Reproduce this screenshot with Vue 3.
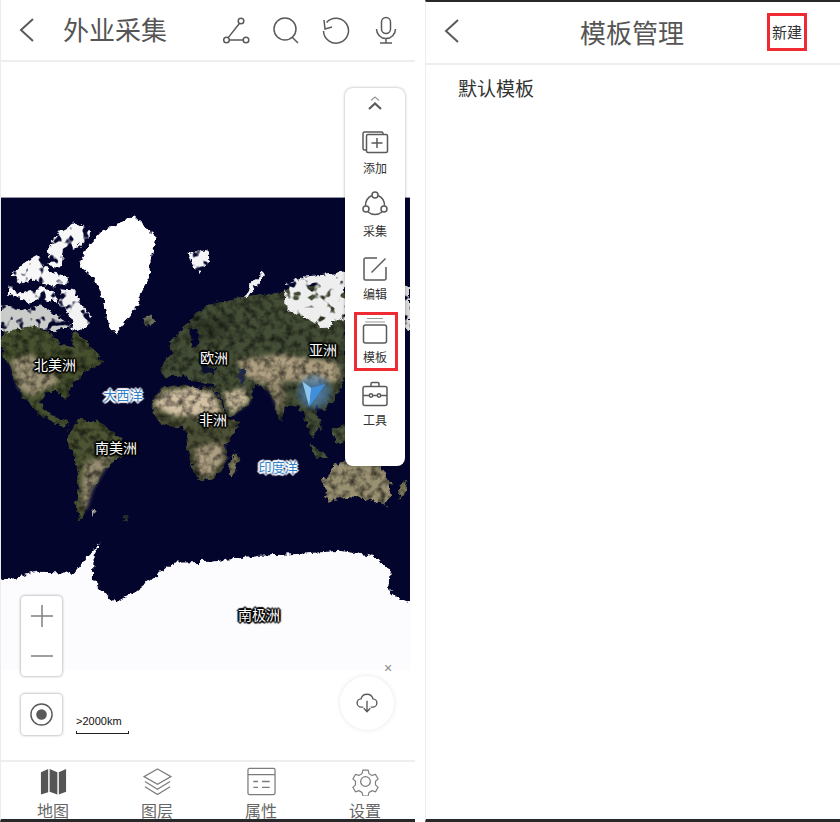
<script setup>
const tools = [
  { key: 'add', label: '添加' },
  { key: 'collect', label: '采集' },
  { key: 'edit', label: '编辑' },
  { key: 'template', label: '模板', active: true },
  { key: 'tool', label: '工具' },
]

const tabs = [
  { key: 'map', label: '地图' },
  { key: 'layer', label: '图层' },
  { key: 'attr', label: '属性' },
  { key: 'set', label: '设置' },
]

// map labels, x / y are relative to the map area
const labels = [
  { text: '北美洲', x: 54, y: 302 },
  { text: '欧洲', x: 213, y: 295 },
  { text: '亚洲', x: 322, y: 287 },
  { text: '大西洋', x: 122, y: 333, sea: true },
  { text: '非洲', x: 212, y: 357 },
  { text: '南美洲', x: 115, y: 385 },
  { text: '印度洋', x: 277, y: 405, sea: true },
  { text: '南极洲', x: 258, y: 552 },
]

const lands = [
  // america
  { c: '#47512f', p: '0,332 30,324 60,338 75,332 90,345 103,362 85,372 70,385 66,402 60,392 45,392 38,402 48,413 68,424 62,427 40,416 25,400 13,378 3,355 0,345' },
  { c: '#4d5433', p: '67,433 80,418 100,423 120,438 120,457 103,470 90,490 83,517 80,522 75,510 78,470 68,447' },
  // eurasia and africa
  { c: '#444e36', p: '165,378 158,368 172,355 168,345 185,325 205,305 240,298 280,292 310,285 345,285 346,375 335,398 325,410 315,405 320,425 313,440 305,420 298,405 285,408 280,422 270,390 255,385 250,403 228,418 218,392 200,385 180,375' },
  { c: '#4d5136', p: '150,408 160,388 195,382 215,392 228,420 240,422 225,445 225,465 210,480 197,480 187,453 185,428 160,425' },
  // islands
  { c: '#9a9172', p: '322,480 335,466 345,460 375,455 392,488 386,506 370,500 345,497 328,502' },
  { c: '#465338', p: '310,445 322,452 328,458 316,458' },
  { c: '#4e583f', p: '332,428 345,424 348,440 335,444' },
  { c: '#7a7658', p: '230,458 236,452 238,462 232,478 227,474' },
  { c: '#7c7a5a', p: '401,484 408,478 405,492 398,500' },
  { c: '#6a7058', p: '142,318 152,316 155,322 146,326' },
  { c: '#b8b8b0', p: '90,510 95,512 93,516' },
  { c: '#4f5a48', p: '122,518 126,516 127,520' },
]

// colour patches inside the land, drawn soft
const patches = [
  { c: '#9c9274', p: '10,360 30,354 48,366 58,382 44,390 30,396 18,388' },
  { c: '#978d72', p: '84,462 102,458 114,450 104,468 92,488 85,510 81,508 82,478' },
  { c: '#d2c1a3', p: '153,405 162,392 195,387 214,395 220,413 198,416 172,416' },
  { c: '#ad9f82', p: '194,448 222,442 222,462 208,477 199,474' },
  { c: '#ad9f80', p: '236,360 280,354 338,362 340,380 318,384 290,380 262,384 246,376' },
  { c: '#cfbf9f', p: '222,393 244,388 249,401 231,414' },
  { c: '#92876a', p: '264,384 280,380 285,396 280,414 272,394' },
  { c: '#343d2a', p: '180,338 200,320 236,312 226,334 200,342' },
]

const seas = [
  { c: '#03052c', p: '50,331 70,330 73,347 58,344' },
  { c: '#03052c', p: '190,330 196,326 199,342 192,348' },
  { c: '#03052c', p: '172,378 200,382 216,386 200,388 180,384' },
  { c: '#20284a', p: '238,368 243,368 245,384 239,382' },
  { c: '#0b1030', p: '200,366 216,368 214,374 202,372' },
]

const arctic = [
  { c: '#f7f7f8', p: '47,250 55,233 73,223 90,227 90,237 77,247 63,250 60,267 50,265' },
  { c: '#f7f7f8', p: '12,273 23,262 37,255 47,270 67,277 67,285 43,285 30,277 23,285 12,277' },
  { c: '#f7f7f8', p: '8,285 20,293 33,290 43,287 53,290 57,303 40,297 30,303 17,298 8,295' },
  { c: '#f2f2f3', p: '60,288 73,290 80,303 90,317 87,327 73,330 68,313 58,303' },
  { c: '#c9ccc8', p: '0,303 20,310 40,305 55,315 70,325 55,331 30,326 0,332' },
  { c: '#f4f4f6', p: '188,254 207,249 208,262 199,273 192,266' },
  { c: '#eeeeee', p: '285,285 305,276 345,272 345,318 325,328 305,318 285,310' },
  { c: '#d9d9d6', p: '402,285 410,284 410,330 402,325' },
]

const snow = [
  { c: '#ffffff', p: '78,265 87,245 100,232 117,223 133,216 143,226 156,236 151,253 148,277 141,290 138,303 128,317 115,334 107,323 103,300 93,277' },
  { c: '#f0f0f0', p: '243,297 250,284 262,272 264,274 254,288 247,298' },
  // antarctica
  { c: '#fcfcfe', p: '0,580 37,572 73,573 90,553 100,542 93,555 92,580 110,600 116,603 133,593 150,580 173,563 210,562 260,556 300,554 340,551 372,556 390,570 388,590 400,600 410,604 420,640 420,690 -10,690 -10,580' },
]
</script>

<template>
  <div class="screens">
    <section class="phone left">
      <header class="bar">
        <svg class="back" viewBox="0 0 20 28"><path d="M16 3 4 14l12 11" /></svg>
        <h1 class="title">外业采集</h1>
        <div class="actions">
          <svg viewBox="0 0 28 28"><circle cx="19" cy="5" r="2.800" /><circle cx="4.500" cy="24" r="2.800" /><circle cx="24" cy="24" r="2.800" /><path d="M17.400 7.500 6.200 21.600M7.300 24h13.900" /></svg>
          <svg viewBox="0 0 28 28"><circle cx="13" cy="13" r="11" /><path d="m20 21 6 6" /></svg>
          <svg viewBox="0 0 28 28"><path d="M2 4 3 13l7-2" /><path d="M4.500 6.500A12.500 12.500 0 1 1 1.500 15" /></svg>
          <svg viewBox="0 0 28 28"><rect x="9.500" y="1.500" width="9" height="16" rx="4.500" /><path d="M4.500 13a9.500 9.500 0 0 0 19 0M14 22.500v4M8 27h12" /></svg>
        </div>
      </header>

      <main class="map-area">
        <svg class="world" viewBox="0 197 410 473">
          <defs>
            <filter id="grain" x="-3%" y="-3%" width="106%" height="106%" color-interpolation-filters="sRGB">
              <feTurbulence type="fractalNoise" baseFrequency="0.14" numOctaves="3" seed="3" result="noise" />
              <feColorMatrix in="noise" type="matrix" values="0 0 0 0 0  0 0 0 0 0  0 0 0 0 0  0 0 0 1.300 -0.500" result="dark" />
              <feComposite in="dark" in2="SourceGraphic" operator="in" result="spots" />
              <feMerge result="all"><feMergeNode in="SourceGraphic" /><feMergeNode in="spots" /></feMerge>
              <feGaussianBlur in="all" stdDeviation="0.400" />
            </filter>
            <filter id="rough" x="-3%" y="-3%" width="106%" height="106%" color-interpolation-filters="sRGB">
              <feTurbulence type="fractalNoise" baseFrequency="0.16" numOctaves="3" seed="11" result="warp" />
              <feDisplacementMap in="SourceGraphic" in2="warp" scale="8" xChannelSelector="R" yChannelSelector="G" />
              <feGaussianBlur stdDeviation="0.400" />
            </filter>
            <filter id="ragged" x="-3%" y="-3%" width="106%" height="106%" color-interpolation-filters="sRGB">
              <feTurbulence type="fractalNoise" baseFrequency="0.16" numOctaves="3" seed="11" result="warp" />
              <feDisplacementMap in="SourceGraphic" in2="warp" scale="8" xChannelSelector="R" yChannelSelector="G" result="shape" />
              <feTurbulence type="fractalNoise" baseFrequency="0.11" numOctaves="2" seed="23" result="noise" />
              <feColorMatrix in="noise" type="matrix" values="0 0 0 0 0  0 0 0 0 0  0 0 0 0 0  0 0 0 8 -4.500" result="holes" />
              <feComposite in="shape" in2="holes" operator="out" />
              <feGaussianBlur stdDeviation="0.400" />
            </filter>
            <filter id="soft" x="-20%" y="-20%" width="140%" height="140%">
              <feGaussianBlur stdDeviation="2" />
            </filter>
            <radialGradient id="glow">
              <stop offset="0" stop-color="#4d7fb0" />
              <stop offset=".65" stop-color="#4d7fb0" stop-opacity=".6" />
              <stop offset="1" stop-color="#4d7fb0" stop-opacity="0" />
            </radialGradient>
          </defs>
          <rect x="0" y="197" width="410" height="420" fill="#03052c" />
          <g filter="url(#grain)">
            <g filter="url(#rough)">
              <polygon v-for="(l, i) in lands" :key="'l' + i" :points="l.p" :fill="l.c" />
            </g>
            <g filter="url(#soft)">
              <polygon v-for="(l, i) in patches" :key="'p' + i" :points="l.p" :fill="l.c" />
            </g>
          </g>
          <g filter="url(#rough)">
            <polygon v-for="(l, i) in seas" :key="'e' + i" :points="l.p" :fill="l.c" />
          </g>
          <g filter="url(#ragged)">
            <polygon v-for="(s, i) in arctic" :key="'a' + i" :points="s.p" :fill="s.c" />
          </g>
          <g filter="url(#rough)">
            <polygon v-for="(s, i) in snow" :key="'s' + i" :points="s.p" :fill="s.c" />
          </g>
          <circle cx="314" cy="392" r="20" fill="url(#glow)" />
          <polygon points="302,381 311,388 309,407" fill="#8ec6f0" />
          <polygon points="311,388 325,384 309,407" fill="#3f8fdc" />
        </svg>

        <span
          v-for="m in labels"
          :key="m.text"
          class="map-label"
          :class="{ sea: m.sea }"
          :style="{ left: m.x + 'px', top: m.y + 'px' }"
        >{{ m.text }}</span>

        <aside class="toolbox">
          <svg class="fold" viewBox="0 0 16 16"><path class="thin" d="m4 4.500 4-3.500 4 3.500" /><path class="bold" d="m2 13 6-5.500 6 5.500" /></svg>
          <div v-for="t in tools" :key="t.key" class="tool" :class="{ active: t.active }">
            <svg viewBox="0 0 28 28">
              <template v-if="t.key === 'add'">
                <path d="M6 22H3.500A1.500 1.500 0 0 1 2 20.500V5.500A1.500 1.500 0 0 1 3.500 4h17A1.500 1.500 0 0 1 22 5.500V6" />
                <rect x="5.500" y="6.500" width="21" height="18" rx="1.500" />
                <path d="M16 10v10M10.500 15h11" />
              </template>
              <template v-else-if="t.key === 'collect'">
                <circle cx="14" cy="4" r="3" /><circle cx="5" cy="18" r="3" /><circle cx="23" cy="18" r="3" />
                <path d="M10.800 4.500A11 11 0 0 0 4.500 14.800M17.200 4.500a11 11 0 0 1 6.300 10.300M7 21a11 11 0 0 0 14 0" />
              </template>
              <template v-else-if="t.key === 'edit'">
                <path d="M16 4H4.500A1.500 1.500 0 0 0 3 5.500v19A1.500 1.500 0 0 0 4.500 26h19a1.500 1.500 0 0 0 1.500-1.500V13" />
                <path d="m10.500 18.500 14-14" />
              </template>
              <template v-else-if="t.key === 'template'">
                <path class="thin" d="M6 1.500h16M4 5h20" />
                <rect x="2.500" y="8" width="23" height="18" rx="2" />
              </template>
              <template v-else>
                <rect x="2" y="6.500" width="24" height="19" rx="2" />
                <path d="M10 6.500V3.500A1 1 0 0 1 11 2.500h6a1 1 0 0 1 1 1v3M2 15.500h6.500M12 15.500h4M19.500 15.500H26" />
                <circle cx="10" cy="15.500" r="1.700" /><circle cx="18" cy="15.500" r="1.700" />
              </template>
            </svg>
            <span>{{ t.label }}</span>
          </div>
        </aside>

        <div class="zoom">
          <button class="zoom-btn"><svg viewBox="0 0 24 24"><path d="M12 1v22M1 12h22" /></svg></button>
          <button class="zoom-btn"><svg viewBox="0 0 24 24"><path d="M1 12h22" /></svg></button>
        </div>
        <button class="locate">
          <svg viewBox="0 0 26 26"><circle cx="13" cy="13" r="11" /><circle class="dot" cx="13" cy="13" r="5.500" /></svg>
        </button>
        <div class="scale"><span>&gt;2000km</span><i></i></div>
        <span class="close">×</span>
        <button class="cloud">
          <svg viewBox="0 0 24 24"><path d="M8 16.500H6A4.500 4.500 0 0 1 5.500 7.500a6.700 6.700 0 0 1 13 0A4.500 4.500 0 0 1 18 16.500h-2M12 9.500V21M8.500 17.800 12 21.500l3.500-3.700" /></svg>
        </button>
      </main>

      <nav class="tabs">
        <div v-for="t in tabs" :key="t.key" class="tab">
          <svg viewBox="0 0 30 30">
            <template v-if="t.key === 'map'">
              <path class="fill" d="M2 5.500 9.500 2v24L2 28.500ZM11 2l8 3.500v23l-8-3ZM20.500 5.500 28 2v23.500l-7.500 3Z" />
            </template>
            <template v-else-if="t.key === 'layer'">
              <path d="M15 2 29 10 15 18 1 10Z" /><path d="m2 15 13 8 13-8M2 20.500l13 8 13-8" />
            </template>
            <template v-else-if="t.key === 'attr'">
              <rect x="1" y="1.500" width="28" height="27" rx="1.500" /><path d="M1 8h28M6.500 15h5M15.500 15h8M6.500 21h5M15.500 21h8" />
            </template>
            <template v-else>
              <path d="m12 2 6 0 1 4 3.500 2 4-1.200 3 5.200-3 2.800v4l3 2.800-3 5.200-4-1.200-3.500 2-1 4h-6l-1-4-3.500-2-4 1.200-3-5.200 3-2.800v-4l-3-2.800 3-5.200 4 1.200 3.500-2Z" transform="translate(1.500 1.500) scale(.9)" />
              <circle cx="15" cy="15" r="5" />
            </template>
          </svg>
          <span>{{ t.label }}</span>
        </div>
      </nav>
    </section>

    <section class="phone right">
      <header class="bar">
        <svg class="back" viewBox="0 0 20 28"><path d="M16 3 4 14l12 11" /></svg>
        <h1 class="title">模板管理</h1>
        <button class="create">新建</button>
      </header>
      <div class="row">默认模板</div>
    </section>
  </div>
</template>

<style>
html, body { background: #fff; }
</style>

<style scoped>
.screens {
  display: flex;
  justify-content: space-between;
  width: 840px;
  height: 822px;
  overflow: hidden;
  background: #fff;
  font-family: "Noto Sans CJK SC", "Noto Sans", sans-serif;
  color: #333;
}
.phone {
  position: relative;
  display: flex;
  flex-direction: column;
  width: 415px;
  height: 822px;
  box-sizing: border-box;
  border-left: 1px solid #ececec;
  border-bottom: 3px solid #26282a;
  overflow: hidden;
}
svg {
  display: block;
  fill: none;
  stroke: #5a5a5a;
  stroke-width: 1.500;
}
button {
  padding: 0;
  border: 0;
  background: #fff;
}

/* top bars */
.bar {
  flex: none;
  display: flex;
  align-items: center;
  box-sizing: border-box;
  height: 62px;
  border-bottom: 2px solid #eeeeee;
}
.left .bar { padding: 0 15px 0 16px; }
.back {
  flex: none;
  width: 20px;
  height: 28px;
  stroke-width: 2;
}
.title {
  margin: -2px 0 0;
  font-size: 26px;
  line-height: 36px;
  font-weight: 400;
  color: #555;
}
.left .title { margin-left: 26px; }
.actions {
  display: flex;
  gap: 22px;
  margin-left: auto;
}
.actions svg {
  width: 28px;
  height: 28px;
}

/* map */
.map-area {
  position: relative;
  flex: 1;
  min-height: 0;
  padding-top: 135px;
}
.world {
  width: 409px;
  height: 473px;
  stroke: none;
}
.map-label {
  position: absolute;
  transform: translate(-50%, -50%);
  font-size: 14px;
  line-height: 18px;
  white-space: nowrap;
  color: #fff;
  text-shadow: 0 0 2px #000, 1px 1px 1px #000, -1px -1px 1px #000, 1px -1px 1px #000, -1px 1px 1px #000, 2px 0 1px #000, -2px 0 1px #000, 0 2px 1px #000, 0 -2px 1px #000;
}
.map-label.sea {
  font-size: 13px;
  color: #2f7fcc;
  text-shadow: 0 0 2px #fff, 1px 1px 1px #fff, -1px -1px 1px #fff, 1px -1px 1px #fff, -1px 1px 1px #fff, 2px 0 1px #fff, -2px 0 1px #fff, 0 2px 1px #fff, 0 -2px 1px #fff;
}

/* tool box */
.toolbox {
  position: absolute;
  left: 344px;
  top: 26px;
  display: flex;
  flex-direction: column;
  align-items: center;
  gap: 16px;
  box-sizing: border-box;
  width: 60px;
  height: 378px;
  padding-top: 8px;
  border-radius: 8px;
  background: #fff;
  box-shadow: 0 0 3px rgba(0, 0, 0, .35);
}
.fold {
  width: 16px;
  height: 16px;
}
.fold .thin { stroke: #999; stroke-width: 1.200; }
.fold .bold { stroke-width: 2.200; }
.tool {
  position: relative;
  display: flex;
  flex-direction: column;
  align-items: center;
  gap: 4px;
  width: 100%;
  font-size: 12px;
  line-height: 15px;
}
.tool svg {
  width: 28px;
  height: 28px;
}
.tool .thin { stroke: #999; stroke-width: 1; }
.tool.active::after {
  content: "";
  position: absolute;
  inset: -5px 7px -7px 9px;
  border: 3px solid #ee2a33;
}

/* map buttons */
.zoom {
  position: absolute;
  left: 20px;
  top: 534px;
  display: flex;
  flex-direction: column;
  width: 41px;
  height: 80px;
  border-radius: 4px;
  background: #fff;
  box-shadow: 0 0 3px rgba(0, 0, 0, .45);
}
.zoom-btn {
  display: flex;
  flex: 1;
  align-items: center;
  justify-content: center;
  background: transparent;
}
.zoom-btn svg {
  width: 24px;
  height: 24px;
  stroke: #808080;
}
.locate {
  position: absolute;
  left: 20px;
  top: 632px;
  display: flex;
  align-items: center;
  justify-content: center;
  width: 41px;
  height: 41px;
  border-radius: 4px;
  box-shadow: 0 0 3px rgba(0, 0, 0, .45);
}
.locate svg {
  width: 25px;
  height: 25px;
}
.locate .dot {
  fill: #5a5a5a;
  stroke: none;
}
.scale {
  position: absolute;
  left: 75px;
  top: 653px;
  width: 53px;
}
.scale span {
  display: block;
  font-family: "Liberation Sans", sans-serif;
  font-size: 11px;
  line-height: 13px;
  color: #111;
}
.scale i {
  display: block;
  height: 2px;
  margin-top: 3px;
  border: 1px solid #222;
  border-top: 0;
}
.close {
  position: absolute;
  left: 383px;
  top: 598px;
  font-family: "Liberation Sans", sans-serif;
  font-size: 14px;
  line-height: 16px;
  color: #888;
}
.cloud {
  position: absolute;
  left: 339px;
  top: 614px;
  display: flex;
  align-items: center;
  justify-content: center;
  width: 54px;
  height: 54px;
  border-radius: 50%;
  box-shadow: 0 0 5px rgba(0, 0, 0, .1);
}
.cloud svg {
  width: 22px;
  height: 22px;
}

/* bottom tabs */
.tabs {
  flex: none;
  display: grid;
  grid-template-columns: repeat(4, 104px);
  box-sizing: border-box;
  height: 59px;
  border-top: 2px solid #eeeeee;
}
.tab {
  display: flex;
  flex-direction: column;
  align-items: center;
  padding-top: 5px;
  font-size: 16px;
  line-height: 22px;
  color: #666;
}
.tab svg {
  width: 29px;
  height: 29px;
  margin-bottom: 3px;
  stroke: #7c7c7c;
  stroke-width: 1.300;
}
.tab .fill {
  fill: #555;
  stroke: none;
}

/* second screen */
.right {
  border-top: 2px solid #26282a;
}
.right .bar {
  position: relative;
  justify-content: center;
  height: 63px;
}
.right .back {
  position: absolute;
  left: 16px;
  top: 15px;
}
.right .title {
  margin-left: -2px;
}
.create {
  position: absolute;
  left: 341px;
  top: 11px;
  width: 40px;
  height: 38px;
  border: 3px solid #ee2a33;
  font-family: inherit;
  font-size: 15px;
  line-height: 20px;
  color: #333;
}
.row {
  padding: 0 0 0 32px;
  margin-top: -1px;
  font-size: 19px;
  line-height: 48px;
  color: #333;
}
</style>
